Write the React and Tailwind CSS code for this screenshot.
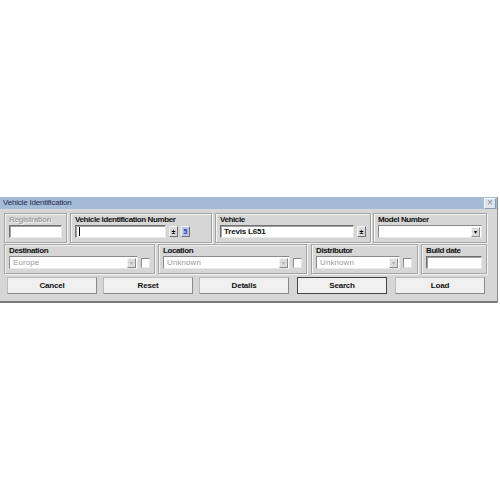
import React from "react"

const font = { fontFamily: '"Liberation Sans", Arial, sans-serif' }

function Group({ label, width, disabled, children }) {
  return (
    <div
      className={`${width} h-[30px] border border-[#a3a3a3] shadow-[inset_1px_1px_0_#f4f4f4,1px_1px_0_#f4f4f4] px-[4px] pt-[1px] flex flex-col`}
    >
      <div
        className={`text-[8px] leading-[9px] font-bold tracking-[-0.4px] ${
          disabled ? "text-[#a3a3a3] [text-shadow:1px_1px_0_#f2f2f2]" : "text-[#111]"
        }`}
      >
        {label}
      </div>
      <div className="flex items-center gap-[3px] mt-[1px]">{children}</div>
    </div>
  )
}

function Field({ width, value, caret }) {
  return (
    <div
      className={`${width} h-[13px] bg-white border border-[#707070] border-r-[#e8e8e8] border-b-[#e8e8e8] shadow-[inset_1px_1px_0_#a0a0a0] flex items-center px-[3px] text-[8px] tracking-[-0.2px] text-[#111] font-bold`}
    >
      {caret && <span className="w-px h-[9px] bg-black" />}
      {value}
    </div>
  )
}

function Combo({ width, value, dark }) {
  return (
    <div
      className={`${width} h-[13px] bg-white border border-[#8a8a8a] border-r-[#e8e8e8] border-b-[#e8e8e8] flex items-center justify-between pl-[3px] pr-[1px] text-[8px] tracking-[0.1px] text-[#9a9a9a]`}
    >
      <span>{value}</span>
      <span
        className={`w-[9px] h-[10px] bg-[#dcdcdc] border border-[#f4f4f4] border-r-[#8a8a8a] border-b-[#8a8a8a] flex items-center justify-center text-[6px] leading-none ${
          dark ? "text-black" : "text-[#b0b0b0]"
        }`}
      >
        ▾
      </span>
    </div>
  )
}

function Check() {
  return <div className="w-[9px] h-[10px] bg-white border border-[#8a8a8a] border-r-[#e8e8e8] border-b-[#e8e8e8]" />
}

function Spin({ blue }) {
  return (
    <div
      className={`w-[9px] h-[11px] border border-[#f4f4f4] border-r-[#707070] border-b-[#707070] flex items-center justify-center text-[7px] leading-none font-bold ${
        blue ? "bg-[#b8c4e8] text-[#2a3aa8]" : "bg-[#dcdcdc] text-black"
      }`}
    >
      {blue ? "5" : "±"}
    </div>
  )
}

function Button({ label, main }) {
  return (
    <div
      className={`w-[90px] h-[17px] bg-[#f0f0f0] border ${
        main ? "border-[#444]" : "border-[#bcbcbc] border-r-[#8a8a8a] border-b-[#8a8a8a]"
      } flex items-center justify-center text-[8px] tracking-[-0.2px] font-bold text-[#111]`}
    >
      {label}
    </div>
  )
}

export default function App() {
  return (
    <div className="w-[500px] h-[500px] bg-white pt-[197px]" style={font}>
      <div className="w-[498px] border-r border-[#8c8c8c]">
        <div className="h-[12px] bg-[#a5bcd9] flex items-center justify-between pl-[3px] pr-px">
          <span className="text-[8px] text-[#1c2a44] tracking-[-0.2px]">Vehicle Identification</span>
          <span className="w-[12px] h-[11px] bg-[#dde5ef] border border-[#f4f8fc] border-r-[#8a9ab0] border-b-[#8a9ab0] flex items-center justify-center text-[10px] leading-none text-[#8a8a8a]">
            ×
          </span>
        </div>
        <div className="bg-[#d6d6d6] border-b-2 border-[#7a7a7a] pl-[4px] pt-[4px] pb-[7px]">
          <div className="flex">
            <Group label="Registration" width="w-[63px]" disabled>
              <Field width="w-[54px]" value="" />
            </Group>
            <div className="w-[3px]" />
            <Group label="Vehicle Identification Number" width="w-[142px]">
              <Field width="w-[91px]" caret />
              <Spin />
              <Spin blue />
            </Group>
            <div className="w-[3px]" />
            <Group label="Vehicle" width="w-[156px]">
              <Field width="w-[134px]" value="Trevis L651" />
              <Spin />
            </Group>
            <div className="w-[2px]" />
            <Group label="Model Number" width="w-[114px]">
              <Combo width="w-[104px]" dark />
            </Group>
          </div>
          <div className="flex mt-px">
            <Group label="Destination" width="w-[151px]">
              <Combo width="w-[131px]" value="Europe" />
              <Check />
            </Group>
            <div className="w-[3px]" />
            <Group label="Location" width="w-[149px]">
              <Combo width="w-[130px]" value="Unknown" />
              <Check />
            </Group>
            <div className="w-[4px]" />
            <Group label="Distributor" width="w-[107px]">
              <Combo width="w-[84px]" value="Unknown" />
              <Check />
            </Group>
            <div className="w-[3px]" />
            <Group label="Build date" width="w-[66px]">
              <Field width="w-[57px]" value="" />
            </Group>
          </div>
          <div className="flex mt-[3px] pl-[3px]">
            <Button label="Cancel" />
            <div className="w-[6px]" />
            <Button label="Reset" />
            <div className="w-[6px]" />
            <Button label="Details" />
            <div className="w-[8px]" />
            <Button label="Search" main />
            <div className="w-[8px]" />
            <Button label="Load" />
          </div>
        </div>
      </div>
    </div>
  )
}
